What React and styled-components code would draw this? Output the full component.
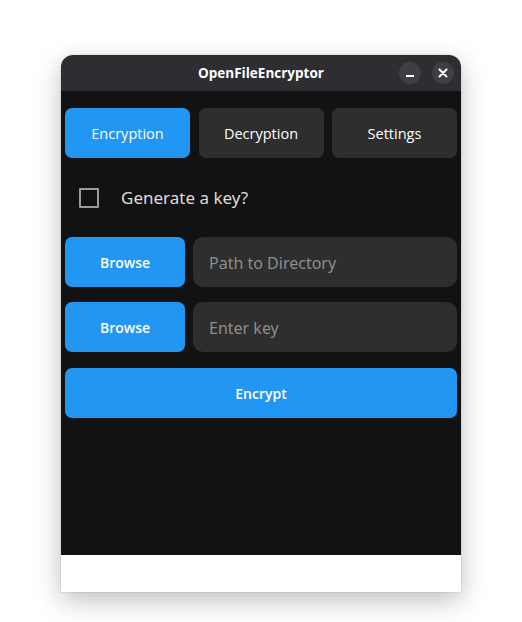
import React from "react";
import styled, { createGlobalStyle } from "styled-components";

const Global = createGlobalStyle`
  html, body { margin: 0; padding: 0; background: #ffffff; }
  body { font-family: "Noto Sans", "Open Sans", sans-serif; }
  * { box-sizing: border-box; }
`;

const Stage = styled.div`
  width: 522px;
  height: 622px;
  padding: 55px 61px 0 61px;
`;

const Window = styled.div`
  width: 400px;
  display: flex;
  flex-direction: column;
  border-radius: 12px 12px 0 0;
  box-shadow: 0 8px 26px rgba(0, 0, 0, 0.26), 0 0 0 1px rgba(0, 0, 0, 0.05);
  overflow: hidden;
  background: #ffffff;
`;

const TitleBar = styled.div`
  height: 36px;
  background: #2e2d32;
  display: grid;
  grid-template-columns: 1fr auto 1fr;
  align-items: center;
  padding: 0 7px;
`;

const Title = styled.div`
  grid-column: 2;
  color: #ffffff;
  font-family: "Open Sans", "Noto Sans", sans-serif;
  font-weight: 700;
  font-size: 13.5px;
`;

const Controls = styled.div`
  grid-column: 3;
  justify-self: end;
  display: flex;
  gap: 11px;
`;

const CtrlBtn = styled.div`
  width: 22px;
  height: 22px;
  border-radius: 50%;
  background: #3f3e44;
  display: flex;
  align-items: center;
  justify-content: center;
`;

const Content = styled.div`
  height: 464px;
  background: #121212;
  padding: 17px 4px 0 4px;
  display: flex;
  flex-direction: column;
`;

const Footer = styled.div`
  height: 37px;
  background: #ffffff;
`;

const Tabs = styled.div`
  display: grid;
  grid-template-columns: 125px 125px 125px;
  justify-content: space-between;
`;

const Tab = styled.div`
  height: 50px;
  border-radius: 7px;
  background: ${(p) => (p.$active ? "#2196f3" : "#2e2e2e")};
  color: #ffffff;
  font-family: "Open Sans", "Noto Sans", sans-serif;
  font-size: 14.5px;
  font-weight: 500;
  display: flex;
  align-items: center;
  justify-content: center;
`;

const CheckRow = styled.label`
  display: flex;
  align-items: center;
  height: 79px;
  padding-left: 14px;
  gap: 22px;
`;

const Box = styled.span`
  width: 20px;
  height: 20px;
  border: 2px solid #9b9b9b;
  border-radius: 1px;
`;

const CheckText = styled.span`
  color: #dcdcdc;
  font-size: 17px;
`;

const Row = styled.div`
  display: grid;
  grid-template-columns: 120px 1fr;
  gap: 8px;
  margin-bottom: ${(p) => p.$mb || 0}px;
`;

const Button = styled.div`
  height: 50px;
  border-radius: 7px;
  background: #2196f3;
  color: #ffffff;
  font-family: "Open Sans", "Noto Sans", sans-serif;
  font-size: 14px;
  font-weight: 600;
  display: flex;
  align-items: center;
  justify-content: center;
`;

const Field = styled.div`
  height: 50px;
  border-radius: 10px;
  background: #2e2e2e;
  color: #8d8d8d;
  font-size: 16px;
  display: flex;
  align-items: center;
  padding-left: 16px;
  padding-top: 1px;
`;

export default function App() {
  return (
    <>
      <Global />
      <Stage>
        <Window>
          <TitleBar>
            <Title>OpenFileEncryptor</Title>
            <Controls>
              <CtrlBtn>
                <svg width="10" height="10" viewBox="0 0 10 10">
                  <rect x="1" y="7" width="8" height="2" fill="#fff" />
                </svg>
              </CtrlBtn>
              <CtrlBtn>
                <svg width="10" height="10" viewBox="0 0 10 10">
                  <path d="M1.5 1.5 L8.5 8.5 M8.5 1.5 L1.5 8.5" stroke="#fff" strokeWidth="2" strokeLinecap="round" />
                </svg>
              </CtrlBtn>
            </Controls>
          </TitleBar>
          <Content>
            <Tabs>
              <Tab $active>Encryption</Tab>
              <Tab>Decryption</Tab>
              <Tab>Settings</Tab>
            </Tabs>
            <CheckRow>
              <Box />
              <CheckText>Generate a key?</CheckText>
            </CheckRow>
            <Row $mb={15}>
              <Button>Browse</Button>
              <Field>Path to Directory</Field>
            </Row>
            <Row $mb={16}>
              <Button>Browse</Button>
              <Field>Enter key</Field>
            </Row>
            <Button>Encrypt</Button>
          </Content>
          <Footer />
        </Window>
      </Stage>
    </>
  );
}
